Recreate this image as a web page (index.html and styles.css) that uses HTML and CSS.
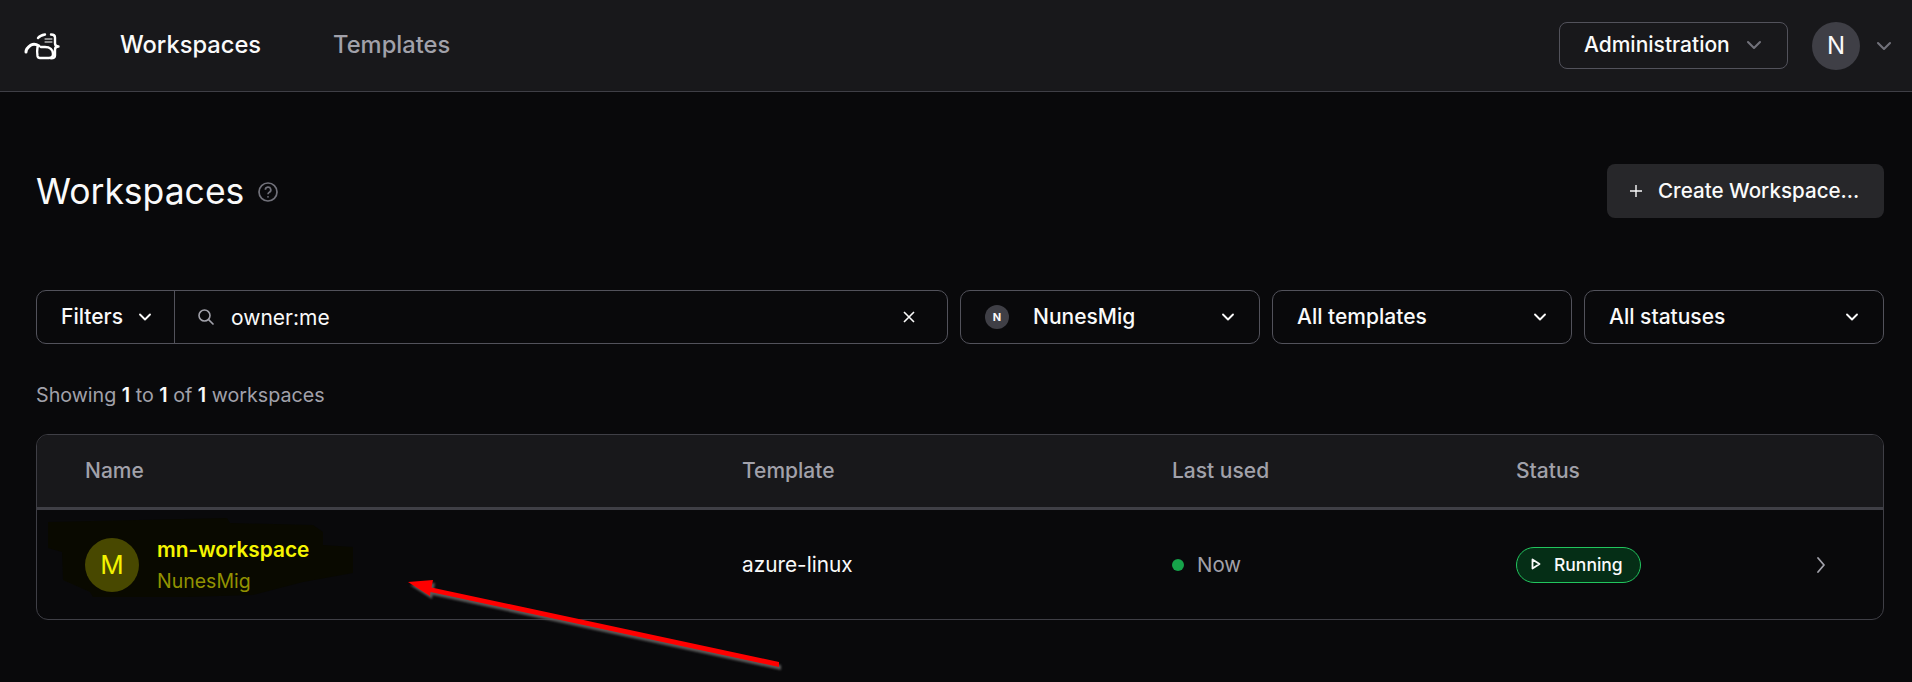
FILE: index.html
```html
<!DOCTYPE html>
<html lang="en">
<head>
<meta charset="utf-8">
<title>Workspaces</title>
<link rel="stylesheet" href="styles.css">
</head>
<body>
<header class="navbar">
  <svg class="logo" viewBox="22 30 40 30" fill="none" stroke="#fff" stroke-linecap="round" stroke-linejoin="round">
    <path stroke-width="3" d="M26 51c0-3 2-5 5-7 3-1.500 5-1 8 1"/>
    <path stroke-width="2.400" d="M37.500 46c-.5 3-.5 6 0 9 .3 1.500 1 2 2.500 2h9c2.500 0 4-1.500 4-4 0-4-3-7-8-7h-4"/>
    <path stroke-width="2.400" d="M38 37c1.500-2 4-3 7-3.500"/>
    <path stroke-width="2.400" d="M51 33.500c3 0 4 1 4 3v6c0 2 1 3 3.500 3-2.500 0-3.500 1-3.500 3v6c0 2-1 2.800-4 2.800"/>
    <path stroke-width="1" d="M45 38h7M45 41h7"/>
  </svg>
  <nav class="nav-links">
    <a class="nav-link active">Workspaces</a>
    <a class="nav-link">Templates</a>
  </nav>
  <div class="nav-right">
    <button class="admin-btn">Administration
      <svg class="chev chev-muted" viewBox="0 0 16 16"><path d="M4 6l4 4 4-4"/></svg>
    </button>
    <div class="user">
      <span class="user-avatar">N</span>
      <svg class="chev chev-muted" viewBox="0 0 16 16"><path d="M4 6l4 4 4-4"/></svg>
    </div>
  </div>
</header>

<main class="page">
  <section class="page-head">
    <div class="title-wrap">
      <h1 class="title">Workspaces</h1>
      <svg class="help" viewBox="0 0 20 20" fill="none"><circle cx="10" cy="10" r="9"/><path d="M7.400 7.800a2.700 2.700 0 1 1 4 2.400c-.9.500-1.400 1-1.400 2"/><circle class="help-dot" cx="10" cy="14.800" r=".9"/></svg>
    </div>
    <button class="create-btn">
      <svg class="plus" viewBox="0 0 14 14"><path d="M7 1v12M1 7h12"/></svg>
      Create Workspace...
    </button>
  </section>

  <section class="filters">
    <div class="search-group">
      <button class="filters-btn">Filters
        <svg class="chev chev-small" viewBox="0 0 16 16"><path d="M4 6l4 4 4-4"/></svg>
      </button>
      <div class="search">
        <svg class="search-icon" viewBox="0 0 18 18" fill="none"><circle cx="7.500" cy="7.500" r="5.500"/><path d="M11.600 11.600L16.500 16.500"/></svg>
        <span class="search-text">owner:me</span>
        <svg class="clear" viewBox="0 0 14 14"><path d="M2 2l10 10M12 2L2 12"/></svg>
      </div>
    </div>
    <button class="select">
      <span class="select-left"><span class="mini-avatar">N</span>NunesMig</span>
      <svg class="chev chev-small" viewBox="0 0 16 16"><path d="M4 6l4 4 4-4"/></svg>
    </button>
    <button class="select">All templates
      <svg class="chev chev-small" viewBox="0 0 16 16"><path d="M4 6l4 4 4-4"/></svg>
    </button>
    <button class="select">All statuses
      <svg class="chev chev-small" viewBox="0 0 16 16"><path d="M4 6l4 4 4-4"/></svg>
    </button>
  </section>

  <p class="count">Showing <b>1</b> to <b>1</b> of <b>1</b> workspaces</p>

  <section class="table">
    <div class="row table-head">
      <div>Name</div><div>Template</div><div>Last used</div><div>Status</div>
    </div>
    <div class="row table-row">
      <svg class="blob" viewBox="48 510 320 90"><polygon points="48,522 227,518 230,523 313,525 323,532 323,545 353,547 353,573 303,582 253,595 187,597 93,597 90,592 63,580 62,552 48,548"/></svg>
      <div class="name-cell">
        <span class="ws-avatar">M</span>
        <div class="name-text">
          <div class="ws-name">mn-workspace</div>
          <div class="ws-owner">NunesMig</div>
        </div>
      </div>
      <div class="template">azure-linux</div>
      <div class="used"><span class="dot"></span>Now</div>
      <div class="status-cell">
        <span class="badge">
          <svg class="play" viewBox="0 0 10 12" fill="none"><path d="M1.500 1.500l7 4.500-7 4.500z"/></svg>
          Running
        </span>
        <svg class="row-chev" viewBox="0 0 12 20" fill="none"><path d="M3 3l6 7-6 7"/></svg>
      </div>
    </div>
  </section>
</main>

<svg class="arrow" viewBox="380 560 420 122">
  <polygon points="408,582 433,580 431.500,587.500 779,662 779,667 430.500,592 430,596"/>
</svg>
</body>
</html>
```

FILE: styles.css
```css
* { box-sizing: border-box; }
html, body { margin: 0; height: 100%; }
body {
  background: #09090b;
  color: #fafafa;
  font-family: Inter, "Noto Sans", sans-serif;
  overflow: hidden;
  position: relative;
}
button {
  font: inherit;
  color: inherit;
  background: none;
  border: 0;
  padding: 0;
}
.chev { width: 24px; height: 24px; fill: none; stroke: #fafafa; stroke-width: 1.4; stroke-linecap: round; stroke-linejoin: round; flex: none; }
.chev-small { width: 20px; height: 20px; stroke-width: 1.500; }
.chev-muted { stroke: #71717a; }

.navbar {
  height: 92px;
  background: #18181b;
  border-bottom: 1px solid #3f3f46;
  display: flex;
  align-items: center;
  padding: 0 16px 0 22px;
}
.logo { width: 40px; height: 30px; margin-right: 58px; }
.nav-links { display: flex; gap: 72px; padding-bottom: 2px; }
.nav-link { font-size: 23.7px; font-weight: 500; color: #a1a1aa; }
.nav-link.active { color: #fafafa; }
.nav-right { margin-left: auto; display: flex; align-items: center; gap: 24px; }
.admin-btn {
  width: 229px; height: 47px;
  border: 1px solid #52525b;
  border-radius: 8px;
  display: flex; align-items: center;
  padding: 0 0 2px 24px;
  gap: 12px;
  font-size: 21px; font-weight: 500;
}
.user { display: flex; align-items: center; gap: 12px; }
.user-avatar {
  width: 48px; height: 48px; border-radius: 50%;
  background: #3f3f46;
  display: flex; align-items: center; justify-content: center;
  font-size: 24px;
}

.page { padding: 0 28px 0 36px; }
.page-head {
  display: flex; align-items: center; justify-content: space-between;
  margin-top: 72px;
  height: 54px;
}
.title-wrap { display: flex; align-items: center; gap: 14px; padding-top: 1px; }
.title { margin: 0; font-size: 35.5px; font-weight: 400; line-height: 54px; }
.help { width: 20px; height: 20px; stroke: #71717a; stroke-width: 1.7; }
.help-dot { fill: #71717a; stroke: none; }
.create-btn {
  height: 54px; width: 277px;
  background: #27272a;
  border-radius: 8px;
  display: flex; align-items: center;
  padding: 0 0 1px 22px;
  gap: 15px;
  font-size: 20.6px; font-weight: 500;
}
.plus { width: 14px; height: 14px; stroke: #fafafa; stroke-width: 1.4; fill: none; }

.filters { display: flex; gap: 12px; margin-top: 72px; }
.search-group {
  width: 912px; height: 54px;
  border: 1px solid #52525b;
  border-radius: 10px;
  display: flex;
}
.filters-btn {
  width: 138px;
  border-right: 1px solid #52525b;
  display: flex; align-items: center;
  padding: 0 0 1px 24px; gap: 12px;
  font-size: 21px; font-weight: 500;
}
.search { flex: 1; display: flex; align-items: center; padding: 0 31px 0 22px; }
.search-icon { width: 18px; height: 18px; stroke: #a1a1aa; stroke-width: 1.6; margin-right: 16px; }
.search-text { font-size: 21px; flex: 1; }
.clear { width: 14px; height: 14px; stroke: #fafafa; stroke-width: 1.6; fill: none; }
.select {
  width: 300px; height: 54px;
  border: 1px solid #52525b;
  border-radius: 10px;
  display: flex; align-items: center; justify-content: space-between;
  padding: 0 21px 1px 24px;
  font-size: 21px; font-weight: 500;
}
.select-left { display: flex; align-items: center; gap: 24px; }
.mini-avatar {
  width: 24px; height: 24px; border-radius: 50%;
  background: #3f3f46;
  display: flex; align-items: center; justify-content: center;
  font-size: 11px; font-weight: 700;
}

.count { margin: 39px 0 0; font-size: 19.7px; line-height: 24px; color: #a1a1aa; }
.count b { color: #fafafa; font-weight: 600; }

.table {
  margin-top: 27px;
  height: 186px;
  border: 1px solid #3f3f46;
  border-radius: 12px;
  overflow: hidden;
}
.row {
  display: grid;
  grid-template-columns: 657px 430px 344px 1fr;
  padding-left: 48px;
  align-items: center;
}
.table-head {
  height: 75px;
  padding-bottom: 2px;
  background: #18181b;
  border-bottom: 3px solid #3f3f46;
  font-size: 21px; font-weight: 500;
  color: #a1a1aa;
}
.table-row { height: 109px; font-size: 21px; position: relative; }
.blob { position: absolute; left: 11px; top: 0; width: 320px; height: 90px; fill: #090900; }
.name-cell { display: flex; align-items: center; gap: 18px; position: relative; }
.ws-avatar {
  width: 54px; height: 54px; border-radius: 50%;
  background: #484800;
  color: #f2f200;
  display: flex; align-items: center; justify-content: center;
  font-size: 26px;
}
.name-text { display: flex; flex-direction: column; gap: 6px; }
.ws-name { color: #f5f500; font-weight: 600; font-size: 20.8px; line-height: 26px; }
.ws-owner { color: #929200; font-size: 19.5px; line-height: 24px; }
.template { font-size: 20.8px; }
.used { display: flex; align-items: center; gap: 13px; color: #a1a1aa; font-size: 20.5px; }
.dot { width: 12px; height: 12px; border-radius: 50%; background: #16a34a; }
.status-cell { display: flex; align-items: center; justify-content: space-between; padding-right: 56px; }
.badge {
  height: 36px; width: 125px;
  background: #052e16;
  border: 1px solid #22c55e;
  border-radius: 18px;
  display: flex; align-items: center;
  padding: 0 0 1px 14px; gap: 13px;
  font-size: 17.5px; font-weight: 500;
}
.play { width: 10px; height: 12px; stroke: #fafafa; stroke-width: 1.8; stroke-linejoin: round; }
.row-chev { width: 12px; height: 20px; stroke: #a1a1aa; stroke-width: 1.8; stroke-linecap: round; stroke-linejoin: round; }

.arrow {
  position: absolute; left: 380px; top: 560px; width: 420px; height: 122px;
  overflow: visible;
  fill: #ff0000;
  filter: drop-shadow(2px 3px 1px #5a5a5a);
}
```
